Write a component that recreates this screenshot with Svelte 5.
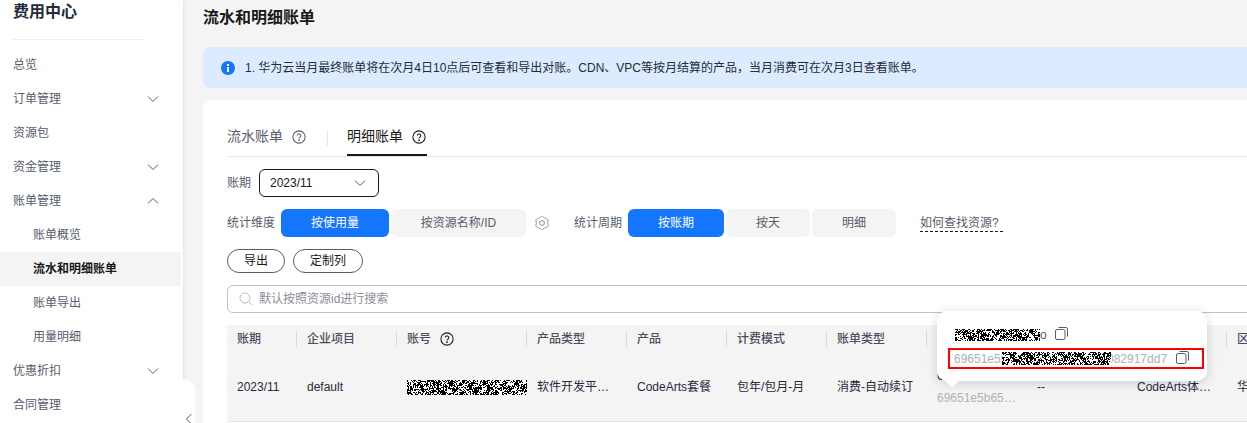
<script>
  const menu = [
    { t: '总览' },
    { t: '订单管理', c: 'down' },
    { t: '资源包' },
    { t: '资金管理', c: 'down' },
    { t: '账单管理', c: 'up' },
    { t: '账单概览', sub: true },
    { t: '流水和明细账单', sub: true, on: true },
    { t: '账单导出', sub: true },
    { t: '用量明细', sub: true },
    { t: '优惠折扣', c: 'down' },
    { t: '合同管理' }
  ];
  const heads = ['账期', '企业项目', '账号', '产品类型', '产品', '计费模式', '账单类型', '', '', '', '区'];

  function noise(w, h, seed) {
    let s = seed, d = '';
    for (let y = 0; y < h; y++) {
      for (let x = 0; x < w; x++) {
        s = (s * 1664525 + 1013904223) >>> 0;
        const a = (x + y) % 11 < 5;
        const b = (x - y + 132) % 17 < 6;
        const p = a && b ? 215 : a || b ? 145 : 95;
        if ((s >>> 24) < p) d += `M${x} ${y}h1v1h-1z`;
      }
    }
    return d;
  }

  function gearPath() {
    let d = '';
    for (let i = 0; i < 72; i++) {
      const t = (i / 72) * Math.PI * 2;
      const r = 6.2 - 0.6 * Math.cos(6 * t);
      d += `${i ? 'L' : 'M'}${(7 + r * Math.cos(t)).toFixed(2)} ${(7 + r * Math.sin(t)).toFixed(2)}`;
    }
    return d + 'z';
  }
</script>

{#snippet help(size)}
  <svg class="help" width={size} height={size} viewBox="0 0 16 16" fill="none" stroke="currentColor" stroke-width="1.2">
    <circle cx="8" cy="8" r="7" />
    <path d="M6 6.4a2 2 0 1 1 3.1 1.7c-.7.4-1.1.8-1.1 1.6" />
    <circle cx="8" cy="11.6" r=".4" />
  </svg>
{/snippet}

{#snippet chevron(dir)}
  <svg class="chev" width="12" height="12" viewBox="0 0 12 12" fill="none" stroke="currentColor">
    <path d={dir === 'up' ? 'M1 8.5 6 3.5l5 5' : 'M1 3.5l5 5 5-5'} />
  </svg>
{/snippet}

{#snippet copy()}
  <svg class="copy" width="13" height="13" viewBox="0 0 13 13" fill="none" stroke="#575d6c">
    <rect x=".5" y="2.5" width="9.5" height="10" rx="1.5" />
    <path d="M3.5.5h7.5a1.5 1.5 0 0 1 1.5 1.5v7.5" />
  </svg>
{/snippet}

{#snippet blot(w, h, seed)}
  <svg class="blot" width={w} height={h} viewBox="0 0 {w} {h}" shape-rendering="crispEdges">
    <rect width={w} height={h} fill="#fff" />
    <path d={noise(w, h, seed)} fill="#000" />
  </svg>
{/snippet}

<div class="page">
  <aside class="side">
    <h1>费用中心</h1>
    <nav>
      {#each menu as m}
        <div class="item" class:sub={m.sub} class:on={m.on}>
          <span>{m.t}</span>
          {#if m.c}{@render chevron(m.c)}{/if}
        </div>
      {/each}
    </nav>
    <div class="collapse">
      <svg width="8" height="12" viewBox="0 0 8 12" fill="none" stroke="#575d6c"><path d="M6.5 1 1.5 6l5 5" /></svg>
    </div>
  </aside>

  <main>
    <h2>流水和明细账单</h2>
    <div class="alert">
      <svg width="14" height="14" viewBox="0 0 14 14">
        <circle cx="7" cy="7" r="7" fill="#1476ff" />
        <rect x="6" y="6" width="2" height="5" fill="#fff" />
        <rect x="6" y="3" width="2" height="2" fill="#fff" />
      </svg>
      <span>1. 华为云当月最终账单将在次月4日10点后可查看和导出对账。CDN、VPC等按月结算的产品，当月消费可在次月3日查看账单。</span>
    </div>

    <section class="card">
      <div class="tabs">
        <div class="tab">流水账单 {@render help(14)}</div>
        <i class="tabsep"></i>
        <div class="tab active">明细账单 {@render help(14)}</div>
      </div>

      <div class="period">
        <span class="lbl">账期</span>
        <div class="select"><span>2023/11</span>{@render chevron('down')}</div>
      </div>

      <div class="filters">
        <span class="lbl">统计维度</span>
        <div class="seg">
          <button class="b1 sel">按使用量</button>
          <button class="b2">按资源名称/ID</button>
        </div>
        <svg class="gear" width="14" height="14" viewBox="0 0 14 14" fill="none" stroke="#8a8e99">
          <path d={gearPath()} />
          <circle cx="7" cy="7" r="2.4" />
        </svg>
        <span class="lbl">统计周期</span>
        <div class="seg">
          <button class="b3 sel">按账期</button>
          <button class="b4">按天</button>
          <button class="b4">明细</button>
        </div>
        <span class="link">如何查找资源?</span>
      </div>

      <div class="actions">
        <button class="pill p1">导出</button>
        <button class="pill p2">定制列</button>
      </div>

      <div class="search">
        <svg width="14" height="14" viewBox="0 0 14 14" fill="none" stroke="#bbb"><circle cx="6" cy="6" r="5" /><path d="m9.7 9.7 3.3 3.3" /></svg>
        <span>默认按照资源id进行搜索</span>
      </div>

      <div class="table">
        <div class="thead">
          {#each heads as h, i}
            <div class="th">{h}{#if i === 2}{@render help(14)}{/if}</div>
          {/each}
        </div>
        <div class="trow">
          <div class="td">2023/11</div>
          <div class="td">default</div>
          <div class="td acct">{@render blot(120, 15, 7)}</div>
          <div class="td">软件开发平…</div>
          <div class="td">CodeArts套餐</div>
          <div class="td">包年/包月-月</div>
          <div class="td">消费-自动续订</div>
          <div class="td idcell"><div>CodeArts</div><div class="grey idnum">69651e5b65…</div></div>
          <div class="td">--</div>
          <div class="td">CodeArts体…</div>
          <div class="td">华</div>
        </div>

        <div class="pop">
          <div class="popline">{@render blot(85, 12, 31)}<span class="o">o</span>{@render copy()}</div>
          <div class="redbox">
            <span class="grey">69651e5b</span><span class="cover">{@render blot(109, 13, 99)}</span><span class="grey tail">082917dd7</span>{@render copy()}
          </div>
          <i class="arrow"></i>
        </div>
      </div>
    </section>
  </main>
</div>

<style>
  :global(body) { margin: 0; background: #f4f4f4; overflow: hidden; }
  .page {
    width: 1247px; height: 423px; overflow: hidden;
    display: grid; grid-template-columns: 183px 1fr;
    background: #f4f4f4; color: #191919;
    font: 12px/18px "Liberation Sans", "Noto Sans CJK SC", sans-serif;
  }
  svg { display: block; flex: none; }

  .side { position: relative; background: #fff; box-shadow: 1px 0 4px rgba(0,0,0,.08); z-index: 1; }
  h1 {
    margin: 0 38px 0 13px; height: 39px; border-bottom: 1px solid #eee;
    font-size: 16px; line-height: 24px; font-weight: 700; color: #252b3a;
  }
  nav { padding-top: 8px; }
  .item {
    height: 34px; display: flex; align-items: center; justify-content: space-between;
    padding: 0 22px 0 13px; margin-right: 2px; color: #575d6c;
  }
  .item.sub { padding-left: 33px; }
  .item.on { background: #f4f4f4; color: #191919; font-weight: 700; }
  .chev { color: #575d6c; }
  .collapse {
    position: absolute; left: 150px; top: 379px; width: 45px; height: 44px;
    background: #fff; border-top-right-radius: 12px;
    display: flex; align-items: flex-end; justify-content: flex-end; box-sizing: border-box;
  }
  .collapse svg { margin: 0 2px -2px 0; }

  main { padding: 0 0 0 20px; min-width: 0; }
  h2 { margin: 0; height: 47px; box-sizing: border-box; padding-top: 6px; font-size: 16px; line-height: 24px; font-weight: 700; color: #191919; }
  .alert {
    height: 41px; width: 1100px; background: #dcebff; border-radius: 8px;
    display: flex; align-items: center; gap: 10px; padding-left: 18px; color: #252b3a;
    margin-bottom: 12px;
  }
  .card { background: #fff; border-radius: 8px; width: 1100px; height: 340px; padding: 0 0 0 24px; box-sizing: border-box; }

  .tabs { height: 57px; box-sizing: border-box; border-bottom: 1px solid #e5e5e5; display: flex; align-items: flex-end; }
  .tab { height: 30px; display: flex; gap: 9px; align-items: flex-start; line-height: 20px; font-size: 14px; color: #575d6c; box-sizing: border-box; }
  .tab .help { margin-top: 4px; color: #575d6c; }
  .tab.active { color: #191919; border-bottom: 2px solid #191919; padding-right: 1px; }
  .tab.active .help { color: #191919; }
  .tabsep { width: 1px; height: 16px; background: #e5e5e5; margin: 0 19px 10px 21px; }

  .lbl { color: #575d6c; }
  .period { display: flex; align-items: center; gap: 8px; margin-top: 12px; }
  .select {
    width: 120px; height: 28px; box-sizing: border-box; border: 1px solid #191919; border-radius: 6px;
    display: flex; align-items: center; justify-content: space-between; padding: 0 12px 0 10px; color: #191919;
  }
  .select .chev { color: #575d6c; }

  .filters { display: flex; align-items: center; margin-top: 12px; height: 28px; }
  .filters > .lbl { margin-right: 6px; }
  .seg { display: flex; gap: 2px; }
  button {
    font: inherit; height: 28px; border: 0; border-radius: 6px; background: #f4f4f4; color: #575d6c; padding: 0;
  }
  button.sel { background: #1476ff; color: #fff; }
  .b1 { width: 108px; } .b2 { width: 135px; } .b3 { width: 96px; } .b4 { width: 84px; }
  .gear { margin: 0 25px 0 9px; }
  .link { margin-left: 24px; width: 83px; color: #575d6c; border-bottom: 1px dashed #191919; line-height: 14px; padding-bottom: 1px; margin-top: 2px; }

  .actions { display: flex; gap: 8px; margin-top: 12px; }
  .pill { height: 24px; background: #fff; border: 1px solid #575d6c; border-radius: 12px; color: #191919; box-sizing: border-box; }
  .p1 { width: 58px; } .p2 { width: 70px; }

  .search {
    margin-top: 12px; height: 28px; box-sizing: border-box; border: 1px solid #c2c2c2; border-radius: 6px;
    display: flex; align-items: center; gap: 6px; padding-left: 11px; color: #8a8e99;
  }

  .table { position: relative; margin-top: 12px; }
  .thead, .trow {
    display: grid; grid-template-columns: 70px 100px 130px 100px 100px 100px 100px 100px 100px 100px 100px;
    background: #f4f4f4;
  }
  .thead { height: 28px; }
  .trow { height: 68px; border-bottom: 1px solid #e5e5e5; }
  .th {
    display: flex; align-items: center; gap: 9px; padding-left: 10px; height: 16px; margin-top: 6px;
    border-right: 1px solid #d9d9d9; color: #4a4f5c; font-weight: 500; white-space: nowrap;
  }
  .th .help { color: #191919; }
  .td { padding: 25px 0 0 10px; color: #252b3a; white-space: nowrap; overflow: hidden; }
  .td.acct { padding-left: 10px; padding-top: 27px; }
  .grey { color: #adb0b8; }
  .idcell { padding-top: 13px; line-height: 20px; }
  .idnum { margin-top: 2px; }

  .pop {
    position: absolute; left: 710px; top: -14px; width: 270px; height: 70px; box-sizing: border-box;
    background: #fff; border-radius: 10px; box-shadow: 0 2px 12px rgba(0,0,0,.16);
    padding: 18px 3px 0 11px;
  }
  .popline { display: flex; align-items: center; padding-left: 7px; height: 12px; }
  .popline .o { color: #575d6c; margin-right: 8px; }
  .popline .copy { margin-top: -3px; }
  .redbox {
    display: flex; align-items: center; box-sizing: border-box; height: 21px; width: 256px;
    margin-top: 7px; border: 2px solid #f00; padding-left: 4px; white-space: nowrap;
  }
  .cover { position: relative; z-index: 1; margin-left: -5.4px; }
  .tail { margin-left: -4px; }
  .redbox .copy { margin-left: 9px; margin-top: -3px; }
  .arrow {
    position: absolute; left: 8px; bottom: -6px; width: 0; height: 0;
    border: 7px solid transparent; border-bottom: 0; border-top: 6px solid #fff;
  }
</style>
